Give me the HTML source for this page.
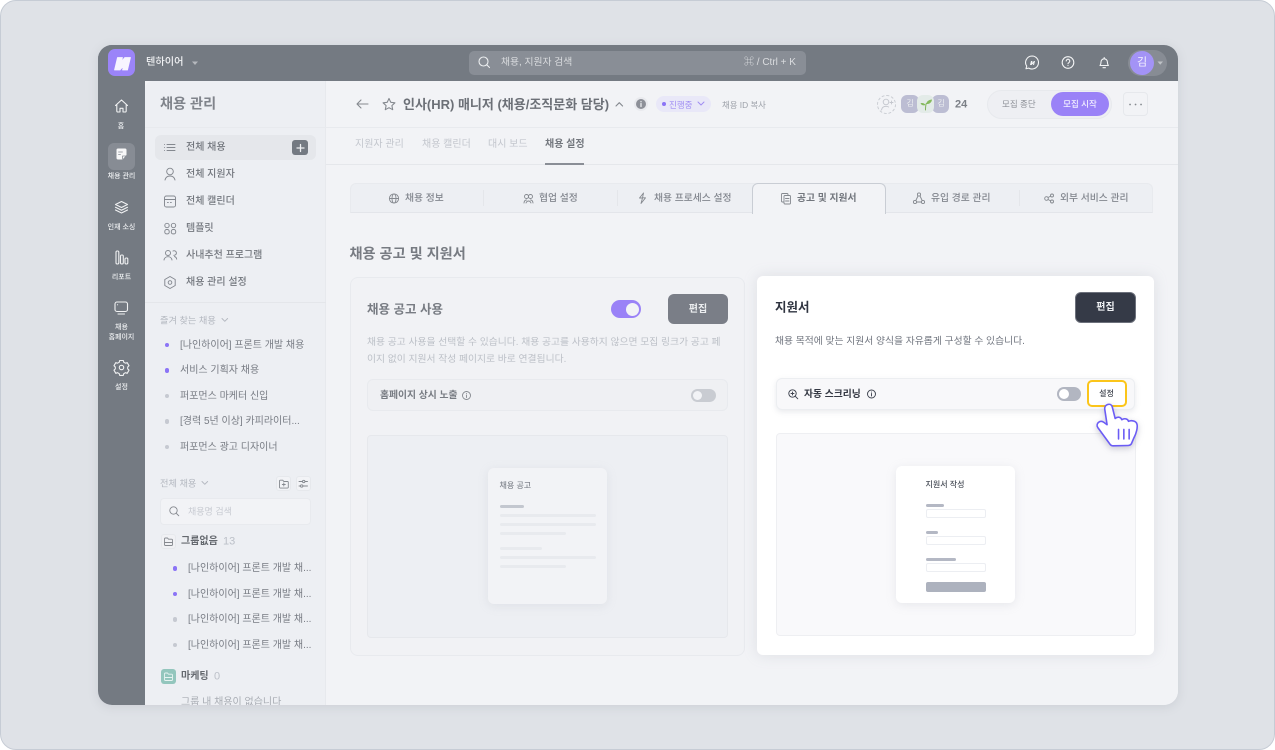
<!DOCTYPE html>
<html lang="ko"><head><meta charset="utf-8"><title>채용 관리</title>
<style>
*{box-sizing:border-box;margin:0;padding:0}
html,body{width:1275px;height:750px;overflow:hidden;background:#fff;font-family:"Liberation Sans","Noto Sans CJK KR",sans-serif}
.o{position:absolute;left:0;top:0;width:1275px;height:750px;background:#dfe2e7;border:1px solid #c6ccd5;border-radius:16px}
.w{position:absolute;left:98px;top:45px;width:1080px;height:660px;overflow:hidden;border-radius:14px;background:#f2f3f6;box-shadow:0 2px 10px rgba(120,128,140,.18)}
.i{position:absolute;left:-98px;top:-45px;width:1275px;height:750px}
.b{position:absolute}
.t{position:absolute;white-space:nowrap;transform:translateY(calc(-50% + 1px));line-height:1.2;font-size:10px;color:#787c84}
.c{text-align:center;transform:translate(-50%,calc(-50% + 1px))}
.r{color:#eceef0;font-size:7px;font-weight:500}
.s{font-weight:700}
.d{position:absolute;width:4.500px;height:4.500px;border-radius:50%;background:#c6c9d1}
.p{background:#8b74f6}
svg{position:absolute;left:0;top:0;overflow:visible}
</style></head><body>
<div class="o"></div>
<div class="w"><div class="i">
<div class="b" style="left:98px;top:45px;width:1080px;height:36px;background:#747a82"></div>
<div class="b" style="left:98px;top:45px;width:47px;height:660px;background:#747a82"></div>
<div class="b" style="left:145px;top:81px;width:1033px;height:640px;background:#f2f3f6;border-radius:8px 0 0 0"></div>
<div class="b" style="left:145px;top:81px;width:181px;height:640px;background:#edeff3;border-right:1px solid #e7e9ed;border-radius:8px 0 0 0"></div>
<div class="b" style="left:108px;top:49px;width:27px;height:27px;background:#9b84f9;border-radius:7px"></div>
<div class="t" style="left:146px;top:61.500px;color:#f0f1f3;font-size:10.200px;font-weight:500">텐하이어</div>
<div class="b" style="left:469px;top:51px;width:337px;height:24px;background:#898e96;border-radius:5px"></div>
<div class="t" style="left:501px;top:61.500px;font-size:9.800px;color:#dadcdf">채용, 지원자 검색</div>
<div class="t" style="left:744px;top:61.500px;font-size:10px;color:#dadcdf">⌘ / Ctrl + K</div>
<div class="b" style="left:1128px;top:50px;width:39px;height:26px;background:#878c94;border-radius:13px"></div>
<div class="b" style="left:1130px;top:51px;width:24px;height:24px;background:#a393f6;border-radius:50%"></div>
<div class="t c" style="left:1142px;top:62px;color:#f4f2ff;font-size:11px">김</div>

<div class="b" style="left:108px;top:143px;width:27px;height:27px;background:#878c94;border-radius:6px"></div>
<div class="t c r" style="left:121px;top:126px">홈</div>
<div class="t c r" style="left:121.500px;top:176px">채용 관리</div>
<div class="t c r" style="left:121.500px;top:227px">인재 소싱</div>
<div class="t c r" style="left:121.500px;top:277px">리포트</div>
<div class="t c r" style="left:121.500px;top:327px">채용</div>
<div class="t c r" style="left:121.500px;top:337px">홈페이지</div>
<div class="t c r" style="left:121.500px;top:387px">설정</div>

<div class="t s" style="left:160px;top:103.500px;font-size:14.200px;color:#80848b">채용 관리</div>
<div class="b" style="left:145px;top:127px;width:1033px;height:1px;background:#e8eaee"></div>
<div class="b" style="left:155px;top:135px;width:161px;height:25px;background:#e5e7eb;border-radius:6px"></div>
<div class="b" style="left:292px;top:140px;width:16px;height:15px;background:#747a82;border-radius:3px"></div>
<div class="t" style="left:186px;top:147px;font-weight:500;color:#73777e">전체 채용</div>
<div class="t" style="left:186px;top:174px;font-weight:500;color:#73777e">전체 지원자</div>
<div class="t" style="left:186px;top:201px;font-weight:500;color:#73777e">전체 캘린더</div>
<div class="t" style="left:186px;top:228px;font-weight:500;color:#73777e">템플릿</div>
<div class="t" style="left:186px;top:255px;font-weight:500;color:#73777e">사내추천 프로그램</div>
<div class="t" style="left:186px;top:282px;font-weight:500;color:#73777e">채용 관리 설정</div>
<div class="b" style="left:145px;top:302px;width:181px;height:1px;background:#e4e6ea"></div>
<div class="t" style="left:160px;top:320px;font-size:9.200px;color:#b4b8c0">즐겨 찾는 채용</div>
<div class="d p" style="left:164.500px;top:342.500px"></div><div class="t" style="left:180px;top:344.500px">[나인하이어] 프론트 개발 채용</div>
<div class="d p" style="left:164.500px;top:368px"></div><div class="t" style="left:180px;top:370px">서비스 기획자 채용</div>
<div class="d" style="left:164.500px;top:393.500px"></div><div class="t" style="left:180px;top:395.500px">퍼포먼스 마케터 신입</div>
<div class="d" style="left:164.500px;top:419px"></div><div class="t" style="left:180px;top:421px">[경력 5년 이상] 카피라이터...</div>
<div class="d" style="left:164.500px;top:444.500px"></div><div class="t" style="left:180px;top:446.500px">퍼포먼스 광고 디자이너</div>
<div class="t" style="left:160px;top:482.500px;font-size:9.200px;color:#b4b8c0">전체 채용</div>
<div class="b" style="left:276px;top:476px;width:15px;height:15px;background:#f2f3f6;border:1px solid #e6e8ec;border-radius:3px"></div>
<div class="b" style="left:296px;top:476px;width:15px;height:15px;background:#f2f3f6;border:1px solid #e6e8ec;border-radius:3px"></div>
<div class="b" style="left:160px;top:498px;width:151px;height:27px;background:#f2f3f6;border:1px solid #e8eaee;border-radius:4px"></div>
<div class="t" style="left:188px;top:511px;font-size:9px;color:#c8cbd2">채용명 검색</div>
<div class="b" style="left:161px;top:534px;width:15px;height:15px;background:#f0f1f4;border:1px solid #e6e8ec;border-radius:3px"></div>
<div class="t s" style="left:181px;top:541px;color:#65696f">그룹없음</div>
<div class="t" style="left:223px;top:541px;color:#bcc0c8;font-size:11px">13</div>
<div class="d p" style="left:172.500px;top:566px"></div><div class="t" style="left:188px;top:568px">[나인하이어] 프론트 개발 채...</div>
<div class="d p" style="left:172.500px;top:591.500px"></div><div class="t" style="left:188px;top:593.500px">[나인하이어] 프론트 개발 채...</div>
<div class="d" style="left:172.500px;top:617px"></div><div class="t" style="left:188px;top:619px">[나인하이어] 프론트 개발 채...</div>
<div class="d" style="left:172.500px;top:642.500px"></div><div class="t" style="left:188px;top:644.500px">[나인하이어] 프론트 개발 채...</div>
<div class="b" style="left:161px;top:669px;width:15px;height:15px;background:#93c6bd;border-radius:3px"></div>
<div class="t s" style="left:181px;top:676px;color:#65696f">마케팅</div>
<div class="t" style="left:214px;top:676px;color:#bcc0c8;font-size:11px">0</div>
<div class="t" style="left:181px;top:702px;color:#a8acb3">그룹 내 채용이 없습니다</div>

<div class="t s" style="left:403px;top:103.500px;font-size:13px;color:#6c7077">인사(HR) 매니저 (채용/조직문화 담당)</div>
<div class="b" style="left:634px;top:97px;width:14px;height:14px;background:#e9eaee;border-radius:50%"></div>
<div class="b" style="left:636px;top:99px;width:10px;height:10px;background:#8d9098;border-radius:50%"></div>
<div class="b" style="left:656px;top:96px;width:55px;height:16px;background:#e9e8f8;border-radius:8px"></div>
<div class="d" style="left:662px;top:102px;width:4px;height:4px;background:#8b74f6"></div>
<div class="t" style="left:669px;top:103.500px;font-size:8.500px;color:#a08df3">진행중</div>
<div class="t" style="left:722px;top:103.500px;font-size:8.400px;color:#9da1a9">채용 ID 복사</div>
<div class="b" style="left:877px;top:95px;width:19px;height:19px;border:1px dashed #c9ccd2;border-radius:50%"></div>
<div class="b" style="left:932px;top:95px;width:17px;height:18px;background:#bcbdd3;border-radius:6px"></div>
<div class="b" style="left:901px;top:95px;width:18px;height:18px;background:#bcbdd3;border-radius:6px"></div>
<div class="b" style="left:917px;top:95px;width:17px;height:18px;background:#e3ebe8;border-radius:6px"></div>
<div class="t c" style="left:910px;top:103px;font-size:8px;color:#eceef0">김</div>
<div class="t c" style="left:941px;top:103px;font-size:8px;color:#eceef0">김</div>
<div class="t s" style="left:955px;top:103.500px;font-size:11px;color:#7b7f86">24</div>
<div class="b" style="left:987px;top:90px;width:125px;height:29px;background:#eeeff3;border:1px solid #e7e9ed;border-radius:15px"></div>
<div class="t" style="left:1002px;top:103px;font-size:8.500px;color:#8d9097">모집 종단</div>
<div class="b" style="left:1051px;top:92px;width:58px;height:24px;background:#9a82f7;border-radius:12px"></div>
<div class="t c" style="left:1080px;top:103px;font-size:8.500px;color:#f3f0ff;font-weight:500">모집 시작</div>
<div class="b" style="left:1123px;top:92px;width:25px;height:24px;border:1px solid #e6e8ec;border-radius:4px"></div>

<div class="t" style="left:355px;top:144px;color:#c3c6cd">지원자 관리</div>
<div class="t" style="left:422px;top:144px;color:#c3c6cd">채용 캘린더</div>
<div class="t" style="left:488px;top:144px;color:#c3c6cd">대시 보드</div>
<div class="t s" style="left:545px;top:144px;color:#74787f">채용 설정</div>
<div class="b" style="left:326px;top:164px;width:852px;height:1px;background:#e5e7eb"></div>
<div class="b" style="left:545px;top:163px;width:39px;height:2px;background:#8a8e96"></div>

<div class="b" style="left:350px;top:183px;width:803px;height:30px;background:#edeff3;border:1px solid #e8eaee;border-bottom-color:#e3e5ea;border-radius:6px 6px 0 0"></div>
<div class="b" style="left:483px;top:190px;width:1px;height:16px;background:#e4e6ea"></div>
<div class="b" style="left:617px;top:190px;width:1px;height:16px;background:#e4e6ea"></div>
<div class="b" style="left:1019px;top:190px;width:1px;height:16px;background:#e4e6ea"></div>
<div class="b" style="left:752px;top:183px;width:134px;height:31px;background:#f2f3f6;border:1px solid #c9cdd4;border-bottom:0;border-radius:6px 6px 0 0"></div>
<div class="t" style="left:405px;top:198px;font-size:9.800px;font-weight:500;color:#83878f">채용 정보</div>
<div class="t" style="left:539px;top:198px;font-size:9.800px;font-weight:500;color:#83878f">협업 설정</div>
<div class="t" style="left:654px;top:198px;font-size:9.800px;font-weight:500;color:#83878f">채용 프로세스 설정</div>
<div class="t s" style="left:797px;top:198px;font-size:9.800px;color:#72767d">공고 및 지원서</div>
<div class="t" style="left:931px;top:198px;font-size:9.800px;font-weight:500;color:#83878f">유입 경로 관리</div>
<div class="t" style="left:1060px;top:198px;font-size:9.800px;font-weight:500;color:#83878f">외부 서비스 관리</div>

<div class="t s" style="left:349.500px;top:253.500px;font-size:14.200px;color:#777b82">채용 공고 및 지원서</div>

<div class="b" style="left:350px;top:277px;width:395px;height:379px;background:#f1f2f5;border:1px solid #e8eaee;border-radius:8px"></div>
<div class="t s" style="left:367px;top:308.500px;font-size:12.500px;color:#787c83">채용 공고 사용</div>
<div class="b" style="left:611px;top:300px;width:30px;height:18px;background:#9a82f7;border-radius:9px"></div>
<div class="b" style="left:626px;top:302.500px;width:13px;height:13px;background:#f2f3f6;border-radius:50%"></div>
<div class="b" style="left:668px;top:294px;width:60px;height:30px;background:#7a7e87;border-radius:6px"></div>
<div class="t c s" style="left:698px;top:308.500px;color:#eceef0">편집</div>
<div class="t" style="left:367px;top:342px;font-size:9.800px;color:#bcc0c7">채용 공고 사용을 선택할 수 있습니다. 채용 공고를 사용하지 않으면 모집 링크가 공고 페</div>
<div class="t" style="left:367px;top:359px;font-size:9.800px;color:#bcc0c7">이지 없이 지원서 작성 페이지로 바로 연결됩니다.</div>
<div class="b" style="left:367px;top:379px;width:361px;height:32px;background:#eff0f3;border:1px solid #e8eaee;border-radius:6px"></div>
<div class="t s" style="left:380px;top:395px;color:#787c83;font-size:9.800px">홈페이지 상시 노출</div>
<div class="b" style="left:691px;top:389px;width:25px;height:13px;background:#c9ccd2;border-radius:7px"></div>
<div class="b" style="left:693px;top:391px;width:9px;height:9px;background:#f2f3f6;border-radius:50%"></div>
<div class="b" style="left:367px;top:435px;width:361px;height:203px;background:#edeff3;border:1px solid #e6e8ec;border-radius:4px"></div>
<div class="b" style="left:488px;top:468px;width:119px;height:136px;background:#f2f3f6;border-radius:6px;box-shadow:0 2px 10px rgba(160,165,175,.18)"></div>
<div class="t" style="left:499.500px;top:485px;font-size:8px;color:#83878f;font-weight:500">채용 공고</div>
<div class="b" style="left:499.500px;top:505px;width:24px;height:3px;background:#c3c7cf;border-radius:2px"></div>
<div class="b" style="left:499.500px;top:514px;width:96px;height:2.500px;background:#e8eaee;border-radius:2px"></div>
<div class="b" style="left:499.500px;top:523px;width:96px;height:2.500px;background:#e8eaee;border-radius:2px"></div>
<div class="b" style="left:499.500px;top:532px;width:66px;height:2.500px;background:#e8eaee;border-radius:2px"></div>
<div class="b" style="left:499.500px;top:547px;width:42px;height:2.500px;background:#e8eaee;border-radius:2px"></div>
<div class="b" style="left:499.500px;top:556px;width:96px;height:2.500px;background:#e8eaee;border-radius:2px"></div>
<div class="b" style="left:499.500px;top:565px;width:66px;height:2.500px;background:#e8eaee;border-radius:2px"></div>

<div class="b" style="left:757px;top:276px;width:397px;height:379px;background:#fff;border-radius:6px;box-shadow:0 0 14px rgba(150,155,170,.22)"></div>
<div class="t s" style="left:775px;top:306.500px;font-size:12.500px;color:#2f3440">지원서</div>
<div class="b" style="left:1075px;top:292px;width:61px;height:31px;background:#353a47;border:1px solid #6d717c;border-radius:6px"></div>
<div class="t c s" style="left:1105.500px;top:307px;color:#eef0f3">편집</div>
<div class="t" style="left:775px;top:340.500px;font-size:9.800px;color:#6f747e">채용 목적에 맞는 지원서 양식을 자유롭게 구성할 수 있습니다.</div>
<div class="b" style="left:776px;top:378px;width:359px;height:32px;background:#f8f8fa;border:1px solid #eceef1;border-radius:6px;box-shadow:0 2px 6px rgba(120,125,140,.16)"></div>
<div class="t s" style="left:804px;top:394px;color:#343843;font-size:9.800px">자동 스크리닝</div>
<div class="b" style="left:1057px;top:387px;width:24px;height:14px;background:#b2b6c1;border-radius:7px"></div>
<div class="b" style="left:1059px;top:389px;width:10px;height:10px;background:#fff;border-radius:50%"></div>
<div class="b" style="left:1087px;top:380px;width:40px;height:27px;background:#fff;border:2.500px solid #fbc51a;border-radius:5px"></div>
<div class="t c" style="left:1106.500px;top:393px;font-size:8px;color:#3d424c;font-weight:500">설정</div>
<div class="b" style="left:776px;top:433px;width:360px;height:203px;background:#f9f9fb;border:1px solid #eeeff2;border-radius:4px"></div>
<div class="b" style="left:896px;top:466px;width:119px;height:137px;background:#fff;border-radius:6px;box-shadow:0 2px 10px rgba(160,165,175,.2)"></div>
<div class="t" style="left:925.500px;top:484px;font-size:8px;color:#4b505a;font-weight:500">지원서 작성</div>
<div class="b" style="left:925.500px;top:504px;width:18px;height:2.500px;background:#b4b8c4;border-radius:2px"></div>
<div class="b" style="left:925.500px;top:509px;width:60px;height:9px;background:#fff;border:1px solid #eceef2;border-radius:2px"></div>
<div class="b" style="left:925.500px;top:531px;width:12px;height:2.500px;background:#b4b8c4;border-radius:2px"></div>
<div class="b" style="left:925.500px;top:536px;width:60px;height:9px;background:#fff;border:1px solid #eceef2;border-radius:2px"></div>
<div class="b" style="left:925.500px;top:558px;width:30px;height:2.500px;background:#b4b8c4;border-radius:2px"></div>
<div class="b" style="left:925.500px;top:563px;width:60px;height:9px;background:#fff;border:1px solid #eceef2;border-radius:2px"></div>
<div class="b" style="left:925.500px;top:582px;width:60px;height:10px;background:#adb2be;border-radius:2px"></div>

<svg width="1275" height="750" viewBox="0 0 1275 750" fill="none" stroke-linecap="round" stroke-linejoin="round">
<!-- logo -->
<path d="M114.500 70L117.500 57.500H122.500L121.500 61.500L124.800 57.500H130.500L127.500 70H122.500L123.500 66L120 70Z" fill="#f7f5ff" stroke="#f7f5ff" stroke-width=".8"/>
<path d="M192 61.500h6l-3 3.500z" fill="#b5b8bd"/>
<!-- search -->
<g stroke="#eceef0" stroke-width="1.100"><circle cx="483.500" cy="61.500" r="4.500"/><path d="M487 65l2.500 2.500"/></g>
<!-- top right -->
<g stroke="#f3f4f5" stroke-width="1.100">
<path d="M1032 56a6.500 6.500 0 1 1-3.300 12.100l-2.700.6.700-2.600a6.500 6.500 0 0 1 5.300-10.100z"/>
<path d="M1030 65l1-4h1.500l-.5 2 2-2h1l-1 4h-1l.4-1.800-1.900 1.800z" fill="#f3f4f5" stroke="none"/>
<circle cx="1068" cy="62.500" r="5.800"/><path d="M1066.200 61a1.800 1.800 0 1 1 2.700 1.600c-.6.300-.9.700-.9 1.200M1068 65.500v.1"/>
<path d="M1100 65.500c1-1.200 1-2 1-3.500a3.200 3.200 0 0 1 6.400 0c0 1.500 0 2.300 1 3.500zM1103 67.700h2.400M1104.200 57.500v1"/>
</g>
<path d="M1157.500 61.500h5.500l-2.750 3.200z" fill="#bfc2c6"/>
<!-- rail icons -->
<g stroke="#f1f2f3" stroke-width="1.100">
<path d="M115.500 105.500l6-5.500 6 5.500M116.800 104.500v6.500a1 1 0 0 0 1 1h2.200v-3.700h3v3.700h2.200a1 1 0 0 0 1-1v-6.500"/>
<path d="M121.500 201.500l6 3-6 3-6-3zM115.500 207.300l6 3 6-3M115.500 210l6 3 6-3"/>
<rect x="116" y="251" width="2.800" height="13" rx="1.200"/><rect x="120.500" y="255" width="2.800" height="9" rx="1.200"/><rect x="125" y="258" width="2.800" height="6" rx="1.200"/>
<rect x="115" y="302" width="12.500" height="9.500" rx="2"/><path d="M118 314h6.500M117.500 304.800h.1"/>
<path d="M119.700 360.800h3.600l.5 1.800 1.700.9 1.700-.6 1.800 3.100-1.300 1.300v1.900l1.300 1.300-1.800 3.100-1.700-.6-1.700.9-.5 1.800h-3.600l-.5-1.800-1.700-.9-1.700.6-1.800-3.100 1.300-1.300v-1.900l-1.300-1.300 1.800-3.100 1.700.6 1.700-.9z" transform="translate(0 -.3)"/><circle cx="121.500" cy="367.500" r="2.200"/>
</g>
<path d="M117 150.500a1.500 1.500 0 0 1 1.500-1.500h7a1.500 1.500 0 0 1 1.500 1.500v5l-4 4.500h-4.500a1.500 1.500 0 0 1-1.500-1.500z" fill="#f7f7f8" transform="translate(-.5 -.5)"/>
<path d="M118.500 152h4M118.500 154.500h2M122.500 159v-3h4" stroke="#878c94" stroke-width=".8"/>
<!-- sidebar icons -->
<g stroke="#84888f" stroke-width=".95">
<path d="M167 144.500h8M167 147.500h8M167 150.500h8M164.500 144.500h.1M164.500 147.500h.1M164.500 150.500h.1"/>
<circle cx="170" cy="171.500" r="3.300"/><path d="M165 180c.6-2.500 2.600-4 5-4s4.400 1.500 5 4"/>
<rect x="164.500" y="196" width="11" height="11" rx="1.800"/><path d="M164.500 199.500h11M167.500 202.500h.8M170.500 202.500h.8"/>
<circle cx="167" cy="225.500" r="2.200"/><circle cx="173.500" cy="225.500" r="2.200"/><rect x="164.800" y="229.500" width="4.400" height="4.400" rx="1.800"/><rect x="171.300" y="229.500" width="4.400" height="4.400" rx="1.800"/>
<circle cx="168" cy="253" r="2.500"/><path d="M164 260c.3-2 2-3.300 4-3.300s3.700 1.300 4 3.300M173 251a2.300 2.300 0 1 1 .8 4.300M174.500 256.500c1.200.4 2 1.400 2.200 2.700"/>
<path d="M170 276.500l5.200 3v6l-5.200 3-5.200-3v-6z"/><circle cx="170" cy="282.500" r="1.800"/>
<path d="M222 318.500l2.800 2.800 2.800-2.800M202 481.500l2.800 2.800 2.800-2.800" stroke="#b4b8c0"/>
</g>
<path d="M300.500 144.500v7M297 148h7" stroke="#edeff1" stroke-width="1.300"/>
<g stroke="#85898f" stroke-width=".9">
<path d="M279.500 481a.8.8 0 0 1 .8-.8h2.500l1 1.300h3.700a.8.800 0 0 1 .8.800v5a.8.800 0 0 1-.8.800h-7.200a.8.800 0 0 1-.8-.8zM283.800 483v3M282.300 484.500h3"/>
<path d="M299 481.500h3.500M305 481.500h2.500M299 486h1.500M303 486h4.500"/><circle cx="303.700" cy="481.500" r="1.200"/><circle cx="301.700" cy="486" r="1.200"/>
<circle cx="173.500" cy="510.500" r="3.700"/><path d="M176.500 513.500l2.300 2.300"/>
<path d="M164.500 539a1 1 0 0 1 1-1h2l1 1.200h3a1 1 0 0 1 1 1v4.300a1 1 0 0 1-1 1h-6a1 1 0 0 1-1-1z"/><path d="M164.500 542.500h8"/>
</g>
<path d="M164.500 674a1 1 0 0 1 1-1h2l1 1.200h3a1 1 0 0 1 1 1v4.300a1 1 0 0 1-1 1h-6a1 1 0 0 1-1-1zM164.500 677.500h8" stroke="#e7f3f1" stroke-width=".9"/>
<!-- header icons -->
<g stroke="#85898f" stroke-width="1.100">
<path d="M368 104h-11M361 100l-4 4 4 4"/>
<path d="M389 98.500l1.800 3.800 4.100.5-3 2.800.8 4.100-3.700-2-3.700 2 .8-4.100-3-2.800 4.100-.5z"/>
<path d="M616 106l3.300-3.300 3.300 3.300"/>
</g>
<path d="M641 101.500v.2M641 103.500v3" stroke="#eceef0" stroke-width="1.300"/>
<path d="M698 102l3 3 3-3" stroke="#a08df3" stroke-width="1"/>
<g stroke="#c3c6cd" stroke-width=".9"><circle cx="886" cy="102" r="2.800"/><path d="M881.500 110c.4-2.400 2.200-3.700 4.500-3.700 1 0 1.900.2 2.600.7M890 102.500h3M891.500 101v3"/></g>
<path d="M925.500 110c0-3 .2-5 .8-6.500" stroke="#7fb35a" stroke-width="1"/>
<path d="M926 104c1-3 3-4.300 6-4.500-.3 3-2.500 4.800-6 4.500z" fill="#86ba5e"/>
<path d="M925.500 105c-1-1.800-2.800-2.300-5-1.800 1 2 3 2.700 5 1.800z" fill="#86ba5e"/>
<path d="M1130 104.500h.1M1135.500 104.500h.1M1141 104.500h.1" stroke="#85898f" stroke-width="1.700"/>
<!-- seg tab icons -->
<g stroke="#85898f" stroke-width=".9">
<circle cx="394" cy="198.500" r="4.600"/><ellipse cx="394" cy="198.500" rx="2" ry="4.600"/><path d="M389.400 198.500h9.200"/>
<circle cx="526.500" cy="196.500" r="2"/><circle cx="530.500" cy="196.500" r="2"/><path d="M524 203c.2-2 1.300-3 2.500-3M533 203c-.2-2-1.300-3-2.500-3M526 203c.5-1.200 1.500-2 2.500-2s2 .8 2.500 2"/>
<path d="M643.500 193l-4 5h3l-1.500 5.500 4.500-5.700h-3z"/>
<rect x="781.500" y="193.500" width="6.500" height="8.500" rx="1"/><rect x="784" y="195.500" width="6.500" height="8.500" rx="1" fill="#f2f3f6"/><path d="M785.500 198.500h3.500M785.500 201h3.500"/>
<circle cx="919" cy="194.500" r="1.600"/><circle cx="915" cy="202" r="1.600"/><circle cx="923" cy="202" r="1.600"/><path d="M918 196l-2.200 4.500M920 196l2.200 4.500M916.700 202h4.600"/>
<circle cx="1046.500" cy="198.500" r="1.800"/><circle cx="1052" cy="195.500" r="1.500"/><circle cx="1052" cy="201.500" r="1.500"/><path d="M1048 197.500l2.700-1.400M1048 199.500l2.700 1.400"/>
<circle cx="466.500" cy="395.500" r="4"/><path d="M466.500 395v2.500M466.500 393.500v.1"/>
</g>
<g stroke="#3f4450" stroke-width=".95">
<circle cx="792.500" cy="393.500" r="3.700"/><path d="M795.300 396.300l2.500 2.500M791 393.500h3M792.500 392v3"/>
<circle cx="871.500" cy="394" r="4"/><path d="M871.500 393.500v2.500M871.500 392v.1"/>
</g>
<!-- hand -->
<g style="filter:drop-shadow(0 2px 3px rgba(90,90,120,.3))" transform="translate(1109 405) scale(1.060) translate(-1109 -405)">
<path d="M1105 409c-.6-4.500 5.500-6.500 7-2.500l2.800 11.200c2.500-2 5.400-1.400 6.300 1.200 2.400-1.700 5.600-.9 6.300 1.500 2.800-1.400 7.200-.3 7.900 2.400 1 3-.5 9-2.800 13.200l-2.500 5.800c-1 1.200-2 1.400-3 1.400l-14 .3c-1.500 0-2.400-.5-3.300-1.800l-11.300-15.500c-2.200-3.400 1.800-7.500 5.800-4.800l3 2.200z" fill="#fff" stroke="#6b5cf5" stroke-width="1.500"/>
<path d="M1118 428v9M1123 428v9M1128 428v9" stroke="#6b5cf5" stroke-width="1.500"/>
</g>
</svg>
</div></div>
</body></html>
